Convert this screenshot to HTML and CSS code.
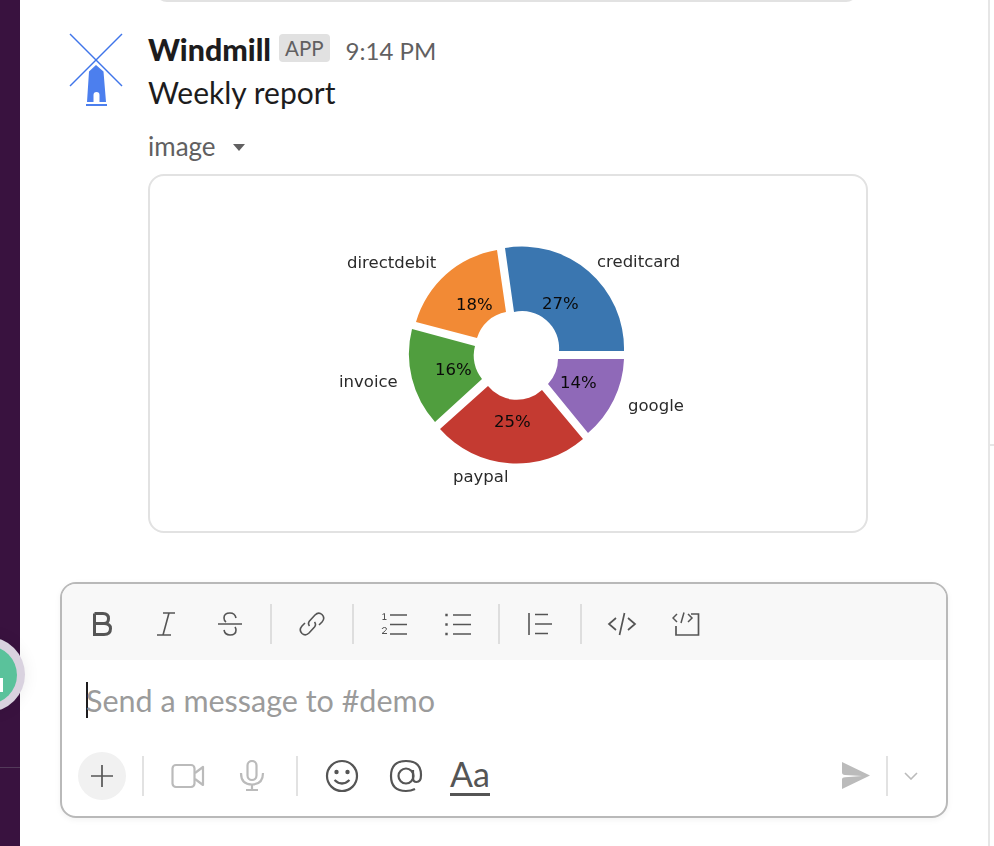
FILE: index.html
```html
<!DOCTYPE html>
<html lang="en">
<head>
    <meta charset="UTF-8">
    <meta name="viewport" content="width=device-width, initial-scale=1.0">
    <title>#demo</title>
    <link rel="stylesheet" href="styles.css">
</head>
<body>
    <aside class="sidebar">
        <div class="sidebar-line"></div>
    </aside>

    <div class="bubble"><div class="bubble-inner"><span class="bubble-mark"></span></div></div>

    <main class="channel">
        <div class="prev-attachment"></div>

        <section class="message">
            <svg class="avatar" viewBox="0 0 72 80" width="72" height="80">
                <g stroke="#3f75ea" stroke-width="1.4" fill="none">
                    <line x1="10" y1="4" x2="62" y2="56"/>
                    <line x1="62" y1="4" x2="10" y2="56"/>
                </g>
                <path fill="#4c7fee" d="M36 35 L43.500 41.500 L46 72 L39.500 72 V65 Q39.500 62 36.500 62 Q33.500 62 33.500 65 V72 L27 72 L29 41.500 Z"/>
                <rect x="26" y="74" width="21" height="2" fill="#4c7fee"/>
            </svg>
            <div class="message-body">
                <div class="message-head">
                    <span class="sender">Windmill</span>
                    <span class="app-tag">APP</span>
                    <span class="time">9:14 PM</span>
                </div>
                <p class="message-text">Weekly report</p>
                <div class="file-name">image <span class="caret"></span></div>
                <div class="image-card">
                    <svg class="pie" viewBox="0 0 380 300" width="380" height="300">
                        <path fill="#3a76b0" d="M294 149 A102 102 0 0 0 175 46 L184 110 A37 37 0 0 1 229 149 Z"/>
                        <path fill="#f28a35" d="M167 48 A102 102 0 0 0 86 120 L147 136 A37 37 0 0 1 176 110 Z"/>
                        <path fill="#509e3e" d="M82 127 A102 102 0 0 0 105 220 L152 177 A37 37 0 0 1 145 144 Z"/>
                        <path fill="#c43a31" d="M110 227 A102 102 0 0 0 253 237 L212 188 A37 37 0 0 1 158 184 Z"/>
                        <path fill="#8f69b8" d="M258 231 A102 102 0 0 0 294 157 L228 157 A37 37 0 0 1 218 182 Z"/>
                        <g class="pie-labels">
                            <text x="267" y="65">creditcard</text>
                            <text x="17" y="66">directdebit</text>
                            <text x="9" y="185">invoice</text>
                            <text x="123" y="280">paypal</text>
                            <text x="298" y="209">google</text>
                        </g>
                        <g class="pie-values">
                            <text x="212" y="107">27%</text>
                            <text x="126" y="108">18%</text>
                            <text x="105" y="173">16%</text>
                            <text x="164" y="225">25%</text>
                            <text x="230" y="186">14%</text>
                        </g>
                    </svg>
                </div>
            </div>
        </section>

        <section class="composer">
            <div class="toolbar">
                <button class="tool">
                    <svg viewBox="0 0 24 24" width="24" height="24" fill="none" stroke="#555" stroke-width="3"><path d="M4.500 1.500 V22.500 H14 Q20.500 22.500 20.500 16.500 Q20.500 11.500 14 11.500 H4.500 M14 11.500 Q18.500 11.500 18.500 6.500 Q18.500 1.500 13 1.500 H4.500"/></svg>
                </button>
                <button class="tool">
                    <svg viewBox="0 0 24 24" width="24" height="24" fill="none" stroke="#555" stroke-width="1.6"><path d="M9 1 H21 M3 23 H17 M15 1 L9 23"/></svg>
                </button>
                <button class="tool">
                    <svg viewBox="0 0 24 24" width="24" height="24" fill="none" stroke="#555" stroke-width="1.6"><path d="M18 6 Q17 1 12 1 Q6 1 6 6 Q6 8.500 8 10 M0 12 H24 M6 18 Q7 23 12 23 Q18 23 18 18 Q18 16.500 17 15"/></svg>
                </button>
                <span class="tool-sep"></span>
                <button class="tool">
                    <svg viewBox="0 0 26 26" width="26" height="26" fill="none" stroke="#555" stroke-width="1.6"><path d="M10.500 15 Q8.500 12.500 10.500 10 L16 4 Q19.500 .500 23 3.500 Q26.500 7 23 11 L20 14"/><path d="M15.500 11 Q17.500 13.500 15.500 16 L10 22 Q6.500 25.500 3 22.500 Q-.500 19 3 15 L6 12"/></svg>
                </button>
                <span class="tool-sep"></span>
                <button class="tool">
                    <svg viewBox="0 0 26 24" width="26" height="24" fill="none" stroke="#555" stroke-width="1.6"><path d="M9 3 H26 M9 12.500 H26 M9 22 H26"/><path stroke-width="1" d="M1.500 2.500 L3.500 1.500 V7.500 M1.500 7.500 H5.500 M1 17 Q1.500 15.500 3.500 15.500 Q5.500 15.500 5.500 17 Q5.500 18 1 21.500 H6"/></svg>
                </button>
                <button class="tool">
                    <svg viewBox="0 0 26 24" width="26" height="24" fill="none" stroke="#555" stroke-width="1.6"><path d="M8 3 H26 M8 12.500 H26 M8 22 H26"/><path stroke-width="2.400" stroke-dasharray="2.400 7.100" d="M1.500 1.800 V24"/></svg>
                </button>
                <span class="tool-sep"></span>
                <button class="tool">
                    <svg viewBox="0 0 24 24" width="24" height="24" fill="none" stroke="#555" stroke-width="1.6"><path d="M1 1 V23 M7 2.500 H20 M7 12 H24 M7 21.500 H20"/></svg>
                </button>
                <span class="tool-sep"></span>
                <button class="tool">
                    <svg viewBox="0 0 30 24" width="30" height="24" fill="none" stroke="#555" stroke-width="1.7"><path d="M9 6 L2 12 L9 18 M21 6 L28 12 L21 18 M17.500 1 L12.500 23"/></svg>
                </button>
                <button class="tool">
                    <svg viewBox="0 0 28 24" width="28" height="24" fill="none" stroke="#555" stroke-width="1.500"><path d="M19 2 H26.500 V23 H4 V14" stroke-width="1.700"/><path d="M5 2 L1 6 L5 10 M16 2 L20 6 L16 10 M12 .5 L9 11"/></svg>
                </button>
            </div>
            <div class="input-row">
                <span class="cursor"></span><span class="placeholder">Send a message to #demo</span>
            </div>
            <div class="actions">
                <button class="plus">
                    <svg viewBox="0 0 24 24" width="24" height="24" fill="none" stroke="#555" stroke-width="1.7"><path d="M12 1 V23 M1 12 H23"/></svg>
                </button>
                <span class="action-sep"></span>
                <button class="action">
                    <svg viewBox="0 0 34 28" width="34" height="28" fill="none" stroke="#bbb" stroke-width="2.200" stroke-linejoin="round"><rect x="1.500" y="3" width="22" height="22" rx="3.500"/><path d="M24 11 L32 5 V23 L24 17"/></svg>
                </button>
                <button class="action">
                    <svg viewBox="0 0 26 32" width="26" height="32" fill="none" stroke="#bbb" stroke-width="2.200"><rect x="8.500" y="1" width="9" height="19" rx="4.500"/><path d="M2 13 Q2 24.500 13 24.500 Q24 24.500 24 13 M13 24.500 V30 M7 30 H19"/></svg>
                </button>
                <span class="action-sep sep-wide"></span>
                <button class="action">
                    <svg viewBox="0 0 34 34" width="34" height="34" fill="none" stroke="#555" stroke-width="2.200"><circle cx="17" cy="17" r="15"/><circle cx="11.500" cy="13" r="2.200" fill="#555" stroke="none"/><circle cx="22.500" cy="13" r="2.200" fill="#555" stroke="none"/><path d="M9.500 21 Q17 28 24.500 21"/></svg>
                </button>
                <button class="action">
                    <svg viewBox="0 0 34 34" width="34" height="34" fill="none" stroke="#555" stroke-width="2.200"><path d="M26 30 Q22 32 17 32 Q2 32 2 17 Q2 2 17 2 Q32 2 32 16 Q32 23 27.500 23 Q24 23 24 19 V11"/><circle cx="17" cy="17" r="7.500"/></svg>
                </button>
                <span class="font-toggle">Aa</span>
                <span class="spacer"></span>
                <svg class="send" viewBox="0 0 28 27" width="28" height="27"><path fill="#bbb" d="M0 0 L28 13.500 L0 27 V17 Q0 15.500 3 15.200 L20 14 L3 13 Q0 12.500 0 10.500 Z"/></svg>
                <span class="action-sep sep-send"></span>
                <svg class="chevron" viewBox="0 0 14 8" width="14" height="8" fill="none" stroke="#bbb" stroke-width="1.600"><path d="M1 1 L7 7 L13 1"/></svg>
            </div>
        </section>
    </main>

    <div class="right-strip"><span class="strip-tick"></span></div>
</body>
</html>
```

FILE: styles.css
```css
* {
    box-sizing: border-box;
}

html, body {
    height: 100%;
}

body {
    margin: 0;
    display: flex;
    height: 846px;
    overflow: hidden;
    background-color: #fff;
    color: #1d1c1d;
    font-family: 'Lato', sans-serif;
}

button {
    padding: 0;
    border: 0;
    background: none;
    display: flex;
    align-items: center;
    justify-content: center;
}

.sidebar {
    width: 20px;
    flex: none;
    background-color: #39123f;
    padding-top: 767px;
}

.sidebar-line {
    height: 1px;
    background-color: #533a5a;
}

.bubble {
    position: absolute;
    left: -50px;
    top: 637px;
    width: 75px;
    height: 75px;
    border-radius: 50%;
    background-color: #d9d2df;
    display: flex;
    align-items: center;
    justify-content: center;
    box-shadow: 0 0 16px rgba(0, 0, 0, .08);
}

.bubble-inner {
    width: 58px;
    height: 58px;
    border-radius: 50%;
    background-color: #5ac29b;
    position: relative;
}

.bubble-mark {
    position: absolute;
    left: 41.5px;
    top: 32.5px;
    width: 3px;
    height: 14px;
    background-color: #fff;
}

.channel {
    flex: 1;
    min-width: 0;
    display: flex;
    flex-direction: column;
}

.prev-attachment {
    height: 12px;
    flex: none;
    margin: -10px 130px 0 135px;
    border: 2px solid #e2e2e2;
    border-radius: 0 0 16px 16px;
}

.message {
    display: flex;
    flex: none;
    margin-top: 32px;
    padding-left: 40px;
}

.avatar {
    flex: none;
    margin-right: 16px;
    margin-top: -4px;
}

.message-body {
    width: 720px;
}

.message-head {
    display: flex;
    align-items: center;
    height: 30px;
}

.sender {
    font-size: 30.3px;
    font-weight: 900;
}

.app-tag {
    margin-left: 8px;
    margin-top: -2px;
    padding: 0 6px;
    height: 28px;
    line-height: 28px;
    border-radius: 4px;
    background-color: #e1e1e1;
    color: #616061;
    font-size: 20.5px;
    font-weight: 400;
}

.time {
    margin-left: 16px;
    color: #616061;
    font-size: 24px;
    margin-top: 2px;
}

.message-text {
    margin: 10px 0 0;
    font-size: 30px;
    line-height: 36px;
}

.file-name {
    margin-top: 20px;
    height: 32px;
    color: #616061;
    font-size: 26px;
    line-height: 32px;
    display: flex;
    align-items: center;
}

.caret {
    margin-left: 17px;
    margin-top: 2px;
    border-top: 7px solid #616061;
    border-left: 6.5px solid transparent;
    border-right: 6.5px solid transparent;
}

.image-card {
    margin-top: 12px;
    width: 720px;
    height: 359px;
    border: 2px solid #e2e2e2;
    border-radius: 16px;
    padding: 26px 0 0 180px;
}

.pie {
    display: block;
    overflow: visible;
    filter: blur(.7px);
}

.pie-labels text {
    fill: #2a2a2a;
    font-family: 'DejaVu Sans', sans-serif;
    font-size: 16.5px;
}

.pie-values text {
    fill: #0a0a0a;
    font-family: 'DejaVu Sans', sans-serif;
    font-size: 16.5px;
}

.composer {
    flex: none;
    margin: 49px 0 0 40px;
    width: 888px;
    height: 236px;
    border: 2px solid #b9b9b9;
    border-radius: 16px;
    overflow: hidden;
    box-shadow: 0 2px 6px rgba(0, 0, 0, .05);
    display: flex;
    flex-direction: column;
}

.toolbar {
    height: 76px;
    flex: none;
    background-color: #f8f8f8;
    display: flex;
    align-items: center;
    padding-left: 8px;
    padding-top: 4px;
}

.tool {
    width: 64px;
    height: 40px;
}

.tool-sep {
    width: 2px;
    height: 40px;
    background-color: #dedede;
    margin: 0 8px;
}

.input-row {
    height: 79px;
    flex: none;
    display: flex;
    align-items: center;
    padding-left: 24px;
}

.cursor {
    width: 2px;
    height: 36px;
    background-color: #1d1c1d;
}

.placeholder {
    color: #9b9b9b;
    font-size: 30.5px;
    margin-left: -2px;
}

.actions {
    flex: 1;
    display: flex;
    align-items: center;
    padding: 0 28px 4px 16px;
}

.plus {
    width: 48px;
    height: 48px;
    border-radius: 50%;
    background-color: #f1f1f1;
}

.action-sep {
    width: 2px;
    height: 40px;
    background-color: #e2e2e2;
    margin: 0 22px 0 16px;
}

.action {
    width: 44px;
    height: 44px;
    margin-right: 20px;
}

.sep-wide {
    margin-left: 2px;
    margin-right: 22px;
}

.font-toggle {
    color: #555;
    font-size: 34px;
    line-height: 38px;
    border-bottom: 3px solid #555;
    margin-left: 2px;
}

.spacer {
    flex: 1;
}

.send {
    flex: none;
}

.sep-send {
    margin: 0 16px;
}

.chevron {
    flex: none;
}

.right-strip {
    width: 6px;
    flex: none;
    border-left: 2px solid #e6e6e6;
    position: relative;
}

.strip-tick {
    position: absolute;
    left: 0;
    top: 444px;
    width: 4px;
    height: 2px;
    background-color: #e6e6e6;
}
```
